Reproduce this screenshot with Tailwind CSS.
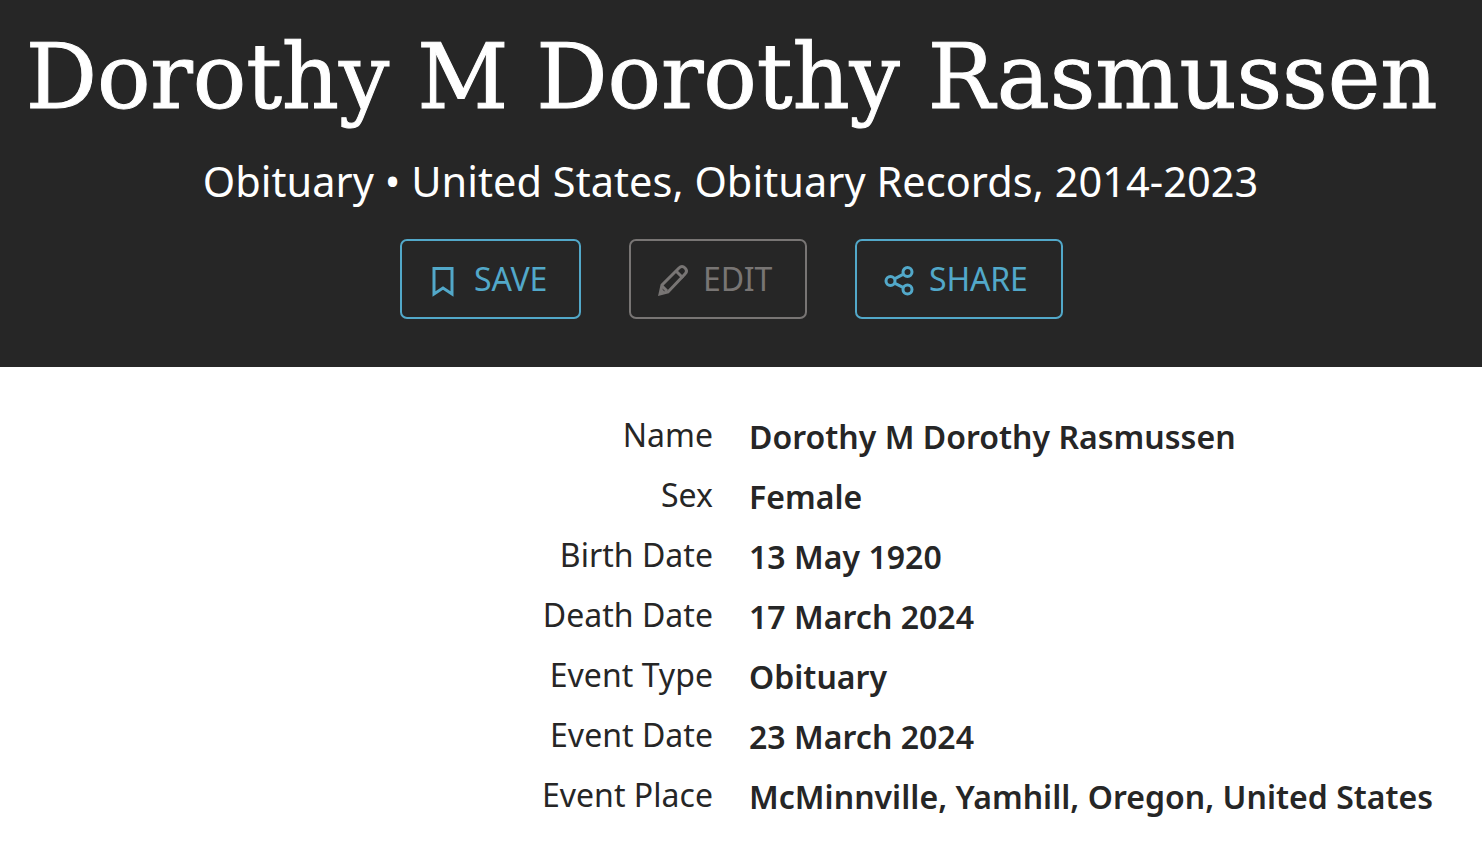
<!DOCTYPE html>
<html lang="en">
<head>
  <meta charset="UTF-8">
  <title>Dorothy M Dorothy Rasmussen</title>
  <script src="https://cdn.jsdelivr.net/npm/@tailwindcss/browser@4"></script>
</head>
<body class="bg-white font-['Noto_Sans',sans-serif] overflow-hidden">
  <!-- header -->
  <div class="bg-[#262626] h-[367px] text-white text-center pt-[27px] pr-[19px]">
    <h1 class="font-['DejaVu_Serif',serif] [-webkit-text-stroke:1px_white] text-[89px] leading-[100px] whitespace-nowrap tracking-[-0.15px]">Dorothy M Dorothy Rasmussen</h1>
    <p class="text-[41.5px] tracking-[0.04px] leading-[54px] mt-[27px] pr-[2px]">Obituary • United States, Obituary Records, 2014-2023</p>
    <div class="flex justify-center gap-[48px] mt-[31px] text-[32px] tracking-[-0.15px]">
      <button class="w-[181px] h-[80px] border-2 border-[#52a8c9] rounded-[7px] text-[#52a8c9] flex items-center pl-[28px] gap-[18px]">
        <svg class="w-[26px] h-[32px] overflow-visible" viewBox="0 0 26 32" fill="none" stroke="currentColor" stroke-width="3"><path d="M4 5.5h18V31l-9-6-9 6z"/></svg>
        <span>SAVE</span>
      </button>
      <button class="w-[178px] h-[80px] border-2 border-[#787574] rounded-[7px] text-[#787574] flex items-center pl-[26px] gap-[14px]">
        <svg class="w-[32px] h-[32px] overflow-visible" viewBox="0 0 32 32" fill="none" stroke="currentColor" stroke-width="3"><path d="M3 31l2-9L22 5c2-2 4-2 6 0s2 4 0 6L11 29z"/><path d="M19 8l7 7M5 23l5 5"/><path d="M2 32l2-7 5 5z" fill="currentColor" stroke="none"/></svg>
        <span>EDIT</span>
      </button>
      <button class="w-[208px] h-[80px] border-2 border-[#52a8c9] rounded-[7px] text-[#52a8c9] flex items-center pl-[27px] gap-[13px]">
        <svg class="w-[32px] h-[32px] overflow-visible" viewBox="0 0 32 32" fill="none" stroke="currentColor" stroke-width="3"><circle cx="6.5" cy="18" r="4.5"/><circle cx="23.5" cy="9" r="4.5"/><circle cx="23.5" cy="26.5" r="4.5"/><path d="M10.5 15.8l9-4.6M10.5 20.2l9 4.4"/></svg>
        <span>SHARE</span>
      </button>
    </div>
  </div>
  <!-- record details -->
  <div class="grid grid-cols-[713px_1fr] gap-x-[36px] gap-y-[20px] pt-[50px] text-[32px] leading-[40px] text-[#262626] tracking-[0.03px]">
    <div class="text-right -mt-[2px]">Name</div><div class="font-semibold">Dorothy M Dorothy Rasmussen</div>
    <div class="text-right -mt-[2px]">Sex</div><div class="font-semibold">Female</div>
    <div class="text-right -mt-[2px]">Birth Date</div><div class="font-semibold">13 May 1920</div>
    <div class="text-right -mt-[2px]">Death Date</div><div class="font-semibold">17 March 2024</div>
    <div class="text-right -mt-[2px]">Event Type</div><div class="font-semibold">Obituary</div>
    <div class="text-right -mt-[2px]">Event Date</div><div class="font-semibold">23 March 2024</div>
    <div class="text-right -mt-[2px]">Event Place</div><div class="font-semibold">McMinnville, Yamhill, Oregon, United States</div>
  </div>
</body>
</html>
